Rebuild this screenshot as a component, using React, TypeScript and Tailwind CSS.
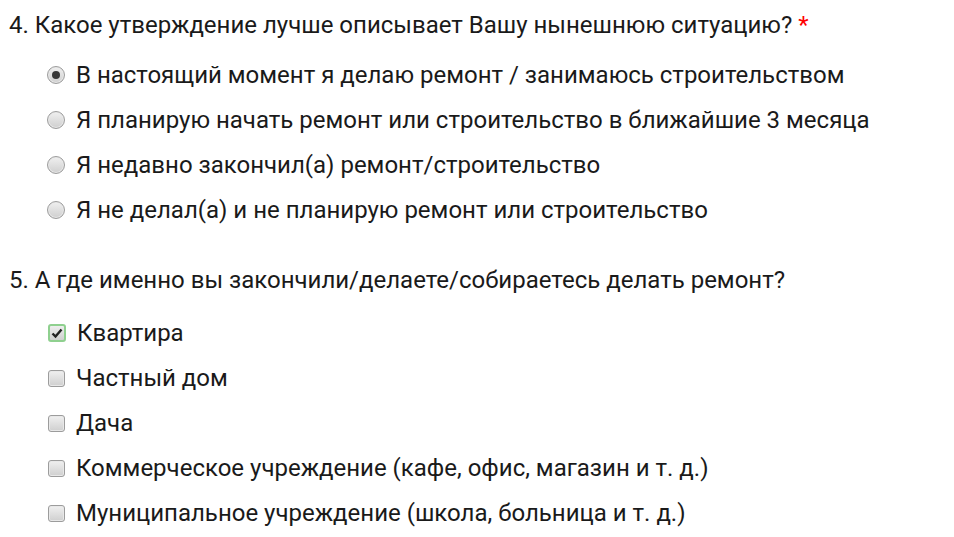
const font = { fontFamily: 'Roboto, "Noto Sans", sans-serif' };

function Radio({ checked }: { checked?: boolean }) {
  return (
    <span className="flex h-[18px] w-[18px] shrink-0 items-center justify-center rounded-full border border-[#9c9c9c] bg-gradient-to-b from-[#f0f0f0] to-[#cfcfcf] shadow-[inset_0_0_0_1px_#e8e8e8]">
      {checked && <span className="h-[8px] w-[8px] rounded-full bg-[#383838]" />}
    </span>
  );
}

function Checkbox({ checked }: { checked?: boolean }) {
  return (
    <span
      className={
        checked
          ? 'flex h-[18px] w-[18px] shrink-0 items-center justify-center rounded-[3px] border-2 border-[#8fd08f] bg-gradient-to-b from-[#eeeeee] to-[#cfcfcf]'
          : 'flex h-[17px] w-[17px] shrink-0 items-center justify-center rounded-[3px] border border-[#9c9c9c] bg-gradient-to-b from-[#f0f0f0] to-[#cfcfcf] shadow-[inset_0_0_0_1px_#e8e8e8]'
      }
    >
      {checked && (
        <svg viewBox="0 0 12 12" className="h-[12px] w-[12px]">
          <path d="M1.5 6.5 L4.5 9.5 L10.5 2.5" fill="none" stroke="#222" strokeWidth="2.4" />
        </svg>
      )}
    </span>
  );
}

const q4 = [
  'В настоящий момент я делаю ремонт / занимаюсь строительством',
  'Я планирую начать ремонт или строительство в ближайшие 3 месяца',
  'Я недавно закончил(а) ремонт/строительство',
  'Я не делал(а) и не планирую ремонт или строительство',
];

const q5 = [
  'Квартира',
  'Частный дом',
  'Дача',
  'Коммерческое учреждение (кафе, офис, магазин и т. д.)',
  'Муниципальное учреждение (школа, больница и т. д.)',
];

export default function App() {
  return (
    <div className="min-h-[537px] w-full bg-white pl-[9px] pt-[11px] text-[24px] leading-[28px] text-[#1a1a1a]" style={font}>
      <div>
        4. Какое утверждение лучше описывает Вашу нынешнюю ситуацию? <span className="text-[#ff0000]">*</span>
      </div>
      <div className="mt-[22px] flex flex-col gap-[17px] pl-[38px]">
        {q4.map((t, i) => (
          <label key={t} className="flex items-center gap-[11px]">
            <Radio checked={i === 0} />
            <span>{t}</span>
          </label>
        ))}
      </div>
      <div className="mt-[42px]">5. А где именно вы закончили/делаете/собираетесь делать ремонт?</div>
      <div className="mt-[25px] flex flex-col gap-[17px] pl-[39px]">
        {q5.map((t, i) => (
          <label key={t} className="flex items-center gap-[11px]">
            <Checkbox checked={i === 0} />
            <span>{t}</span>
          </label>
        ))}
      </div>
    </div>
  );
}
